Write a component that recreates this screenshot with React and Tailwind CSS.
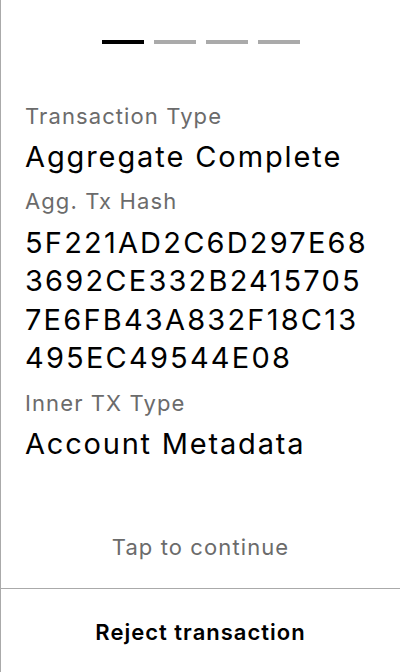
export default function App() {
  const hash = ['5F221AD2C6D297E68', '3692CE332B2415705', '7E6FB43A832F18C13', '495EC49544E08'];

  return (
    <div className="flex h-[672px] w-[400px] flex-col border-l border-[#aaaaaa] bg-white font-['Inter',sans-serif] text-black">
      {/* Step indicator */}
      <div className="flex justify-center gap-[10px] pt-10">
        <div className="h-1 w-[42px] bg-black" />
        <div className="h-1 w-[42px] bg-[#aaaaaa]" />
        <div className="h-1 w-[42px] bg-[#aaaaaa]" />
        <div className="h-1 w-[42px] bg-[#aaaaaa]" />
      </div>

      {/* Transaction details */}
      <div className="flex flex-col px-6 pt-[58px]">
        <div className="text-[22px] leading-7 tracking-[1.1px] text-[#6b6b6b]">Transaction Type</div>
        <div className="mt-2 text-[29px] leading-[38.5px] tracking-[1.9px]">Aggregate Complete</div>
        <div className="mt-[10px] text-[22px] leading-7 tracking-[1.1px] text-[#6b6b6b]">Agg. Tx Hash</div>
        <div className="mt-[9px] text-[29px] leading-[38.5px] tracking-[2.2px]">
          {hash.map((line) => (
            <div key={line}>{line}</div>
          ))}
        </div>
        <div className="mt-[11px] text-[22px] leading-7 tracking-[1.1px] text-[#6b6b6b]">Inner TX Type</div>
        <div className="mt-2 text-[29px] leading-[38.5px] tracking-[1.8px]">Account Metadata</div>
      </div>

      <div className="flex-1" />

      <div className="pb-[27px] text-center text-[22px] leading-7 tracking-[1.1px] text-[#6b6b6b]">Tap to continue</div>

      <button className="flex h-[84px] items-center justify-center border-t border-[#aaaaaa] pt-1 text-[22px] font-semibold tracking-[1px]">
        Reject transaction
      </button>
    </div>
  );
}
